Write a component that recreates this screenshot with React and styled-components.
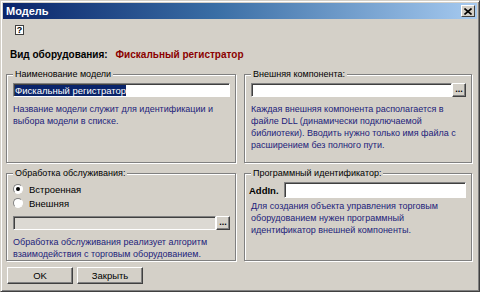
import React from "react";
import styled, { createGlobalStyle } from "styled-components";

const GlobalStyle = createGlobalStyle`
  html, body {
    margin: 0;
    padding: 0;
    background: #d4d0c8;
  }
  body {
    font-family: "Liberation Sans", Arial, sans-serif;
    font-size: 9px;
  }
`;

const Window = styled.div`
  width: 480px;
  height: 292px;
  box-sizing: border-box;
  background: #d4d0c8;
  border: 1px solid #d4d0c8;
  border-right-color: #404040;
  border-bottom-color: #404040;
  box-shadow: inset 1px 1px 0 #ffffff, inset -1px -1px 0 #808080;
  padding: 2px;
  display: flex;
  flex-direction: column;
  overflow: hidden;
`;

const TitleBar = styled.div`
  height: 16px;
  display: flex;
  align-items: center;
  justify-content: space-between;
  padding: 0 2px 0 3px;
  background: linear-gradient(to right, #0a246a 0%, #3a6ea5 45%, #a6caf0 100%);
  color: #ffffff;
  font-weight: bold;
  font-size: 11px;
`;

const CloseButton = styled.div`
  width: 14px;
  height: 12px;
  box-sizing: border-box;
  background: #d4d0c8;
  border: 1px solid #ffffff;
  border-right-color: #404040;
  border-bottom-color: #404040;
  display: flex;
  align-items: center;
  justify-content: center;
`;

const Body = styled.div`
  flex: 1;
  display: flex;
  flex-direction: column;
  padding: 6px 4px 0 3px;
`;

const HelpIcon = styled.div`
  width: 9px;
  height: 10px;
  margin-left: 9px;
  box-sizing: border-box;
  border: 1px solid #404040;
  background: #ffffff;
  font-size: 9px;
  font-weight: bold;
  line-height: 8px;
  text-align: center;
  color: #000;
`;

const KindRow = styled.div`
  display: flex;
  gap: 8px;
  margin-top: 14px;
  padding-left: 4px;
  font-weight: bold;
  font-size: 10px;
  color: #000;
`;

const KindValue = styled.span`
  color: #8b0000;
`;

const Grid = styled.div`
  display: grid;
  grid-template-columns: 230px 228px;
  grid-template-rows: 89px 88px;
  column-gap: 8px;
  row-gap: 10px;
  margin-top: 14px;
`;

const Group = styled.div`
  position: relative;
  box-sizing: border-box;
  border: 1px solid #808080;
  box-shadow: inset 1px 1px 0 #ffffff, 1px 1px 0 #ffffff;
  padding: 8px 5px 0 6px;
  display: flex;
  flex-direction: column;
`;

const Legend = styled.span`
  position: absolute;
  top: -7px;
  left: 6px;
  padding: 0 2px;
  background: #d4d0c8;
  color: #000;
  line-height: 12px;
`;

const FieldRow = styled.div`
  display: flex;
  align-items: center;
  gap: ${(p) => p.$gap || 0}px;
  margin-top: ${(p) => p.$top || 0}px;
  margin-left: ${(p) => p.$left || 0}px;
`;

const Input = styled.div`
  flex: 1;
  height: ${(p) => p.$height || 14}px;
  box-sizing: border-box;
  background: ${(p) => (p.$disabled ? "#dcd9d3" : "#ffffff")};
  border: 1px solid #808080;
  border-right-color: #ffffff;
  border-bottom-color: #ffffff;
  box-shadow: inset 1px 1px 0 #404040;
  padding: 0 1px;
  display: flex;
  align-items: center;
  line-height: 11px;
  font-size: 9.5px;
`;

const Selected = styled.span`
  background: #0a246a;
  color: #ffffff;
`;

const DotsButton = styled.div`
  width: 14px;
  height: 14px;
  box-sizing: border-box;
  background: #d4d0c8;
  border: 1px solid #ffffff;
  border-right-color: #404040;
  border-bottom-color: #404040;
  box-shadow: inset -1px -1px 0 #808080;
  font-size: 9px;
  font-weight: bold;
  line-height: 10px;
  text-align: center;
  color: #000;
`;

const Hint = styled.p`
  margin: ${(p) => p.$top ?? 6}px 0 0 0;
  color: #22227a;
  line-height: 12px;
`;

const Radio = styled.label`
  display: flex;
  align-items: center;
  gap: 6px;
  height: 14px;
  color: #000;
  font-size: 9.5px;
`;

const RadioDot = styled.span`
  width: 10px;
  height: 10px;
  box-sizing: border-box;
  border-radius: 50%;
  background: #ffffff;
  border: 1px solid #808080;
  border-right-color: #ffffff;
  border-bottom-color: #ffffff;
  display: flex;
  align-items: center;
  justify-content: center;
  &::after {
    content: "";
    width: 4px;
    height: 4px;
    border-radius: 50%;
    background: ${(p) => (p.$checked ? "#000" : "transparent")};
  }
`;

const BoldLabel = styled.span`
  font-weight: bold;
  font-size: 9.5px;
  color: #000;
`;

const Buttons = styled.div`
  display: flex;
  gap: 4px;
  margin-top: 6px;
  margin-left: 1px;
`;

const Button = styled.div`
  width: 66px;
  height: 17px;
  box-sizing: border-box;
  background: #d4d0c8;
  border: 1px solid #ffffff;
  border-right-color: #404040;
  border-bottom-color: #404040;
  box-shadow: inset -1px -1px 0 #808080;
  display: flex;
  align-items: center;
  justify-content: center;
  color: #000;
  font-size: 9.5px;
`;

export default function App() {
  return (
    <>
      <GlobalStyle />
      <Window>
        <TitleBar>
          <span>Модель</span>
          <CloseButton>
            <svg width="8" height="7" viewBox="0 0 8 7">
              <path d="M0.5 0.5 L7.5 6.5 M7.5 0.5 L0.5 6.5" stroke="#000" strokeWidth="1.6" />
            </svg>
          </CloseButton>
        </TitleBar>
        <Body>
          <HelpIcon>?</HelpIcon>
          <KindRow>
            <span>Вид оборудования:</span>
            <KindValue>Фискальный регистратор</KindValue>
          </KindRow>
          <Grid>
            <Group>
              <Legend>Наименование модели</Legend>
              <FieldRow>
                <Input>
                  <Selected>Фискальный регистратор</Selected>
                </Input>
              </FieldRow>
              <Hint>
                Название модели служит для идентификации и
                <br />
                выбора модели в списке.
              </Hint>
            </Group>
            <Group>
              <Legend>Внешняя компонента:</Legend>
              <FieldRow>
                <Input />
                <DotsButton>...</DotsButton>
              </FieldRow>
              <Hint>
                Каждая внешняя компонента располагается в
                <br />
                файле DLL (динамически подключаемой
                <br />
                библиотеки). Вводить нужно только имя файла с
                <br />
                расширением без полного пути.
              </Hint>
            </Group>
            <Group>
              <Legend>Обработка обслуживания:</Legend>
              <Radio>
                <RadioDot $checked />
                Встроенная
              </Radio>
              <Radio>
                <RadioDot />
                Внешняя
              </Radio>
              <FieldRow $top={6}>
                <Input $disabled />
                <DotsButton>...</DotsButton>
              </FieldRow>
              <Hint>
                Обработка обслуживания реализует алгоритм
                <br />
                взаимодействия с торговым оборудованием.
              </Hint>
            </Group>
            <Group>
              <Legend>Программный идентификатор:</Legend>
              <FieldRow $gap={5} $left={-2}>
                <BoldLabel>AddIn.</BoldLabel>
                <Input $height={16} />
              </FieldRow>
              <Hint $top={2}>
                Для создания объекта управления торговым
                <br />
                оборудованием нужен программный
                <br />
                идентификатор внешней компоненты.
              </Hint>
            </Group>
          </Grid>
          <Buttons>
            <Button>OK</Button>
            <Button>Закрыть</Button>
          </Buttons>
        </Body>
      </Window>
    </>
  );
}
